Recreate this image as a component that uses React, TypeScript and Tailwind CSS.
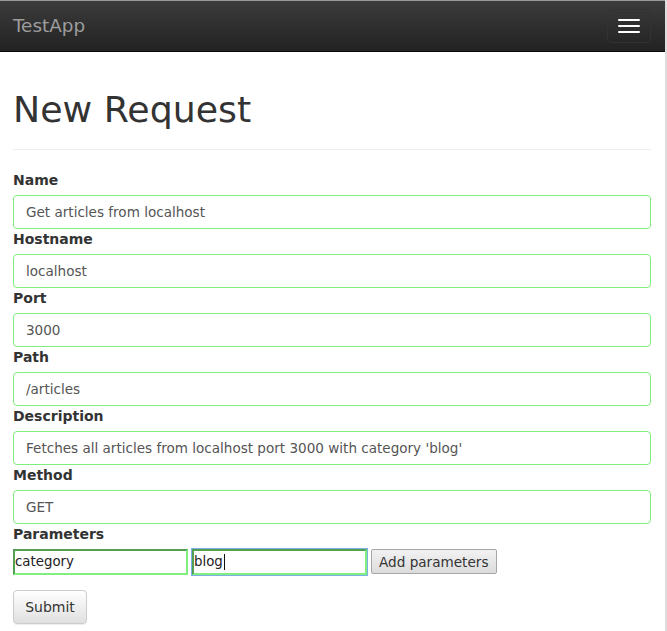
import { useState } from "react";

type Field = {
  label: string;
  value: string;
};

const FIELDS: Field[] = [
  { label: "Name", value: "Get articles from localhost" },
  { label: "Hostname", value: "localhost" },
  { label: "Port", value: "3000" },
  { label: "Path", value: "/articles" },
  {
    label: "Description",
    value: "Fetches all articles from localhost port 3000 with category 'blog'",
  },
  { label: "Method", value: "GET" },
];

function Navbar() {
  return (
    <nav className="flex h-[52px] items-center justify-between border-t border-b border-t-[#9a9a9a] border-b-[#080808] bg-gradient-to-b from-[#3c3c3c] to-[#222222] pr-[14px] pl-[13px]">
      <span className="text-[18.4px] leading-5 text-[#9d9d9d]">TestApp</span>
      <button
        type="button"
        className="flex h-[34px] w-[44px] flex-col items-center gap-1 rounded border border-[#333333] pt-[9px]"
      >
        <span className="block h-[2px] w-[22px] rounded-[1px] bg-white" />
        <span className="block h-[2px] w-[22px] rounded-[1px] bg-white" />
        <span className="block h-[2px] w-[22px] rounded-[1px] bg-white" />
      </button>
    </nav>
  );
}

function FormField({ label, value }: Field) {
  return (
    <div className="flex flex-col">
      <label className="mb-[5px] text-sm leading-5 font-bold text-[#333333]">
        {label}
      </label>
      <input
        readOnly
        defaultValue={value}
        className="h-[34px] w-full rounded border border-[#7ff07f] bg-white px-3 text-[13.55px] text-[#555555] outline-none"
      />
    </div>
  );
}

export default function App() {
  const [key] = useState("category");
  const [val] = useState("blog");

  return (
    <div className="min-h-screen w-full border-r-2 border-[#dddddd] bg-white font-['DejaVu_Sans',sans-serif]">
      <Navbar />

      <main className="pr-[14px] pl-[13px]">
        <div className="mt-[38px] mb-5 border-b border-[#eeeeee] pb-[9px]">
          <h1 className="mb-[10px] text-[36.3px] leading-[1.1] font-normal text-[#333333]">
            New Request
          </h1>
        </div>

        <form className="flex flex-col">
          {FIELDS.map((f) => (
            <FormField key={f.label} label={f.label} value={f.value} />
          ))}

          <label className="mb-[5px] text-sm leading-5 font-bold text-[#333333]">
            Parameters
          </label>
          <div className="flex items-center gap-1">
            <div className="flex h-[26px] w-[175px] items-center border-2 border-t-[#52a052] border-r-[#7ff07f] border-b-[#7ff07f] border-l-[#52a052] bg-white text-[13.33px] text-[#222222]">
              {key}
            </div>
            <div className="flex h-[26px] w-[175px] items-center border-2 border-t-[#52a052] border-r-[#7ff07f] border-b-[#7ff07f] border-l-[#52a052] bg-white text-[13.33px] text-[#222222] outline outline-1 outline-offset-0 outline-[#7eaee8]">
              {val}
              <span className="ml-[1px] inline-block h-[16px] w-px bg-[#111111]" />
            </div>
            <button
              type="button"
              className="h-[25px] rounded-[2px] border border-[#a6a6a6] bg-gradient-to-b from-[#f2f2f2] to-[#dcdcdc] px-[7px] text-[13.6px] text-[#333333]"
            >
              Add parameters
            </button>
          </div>

          <div className="mt-[15px]">
            <button
              type="button"
              className="h-[34px] w-[74px] rounded border border-[#cccccc] bg-gradient-to-b from-white to-[#e0e0e0] text-sm text-[#333333] shadow-[0_1px_1px_rgba(0,0,0,0.075)]"
            >
              Submit
            </button>
          </div>
        </form>
      </main>
    </div>
  );
}
